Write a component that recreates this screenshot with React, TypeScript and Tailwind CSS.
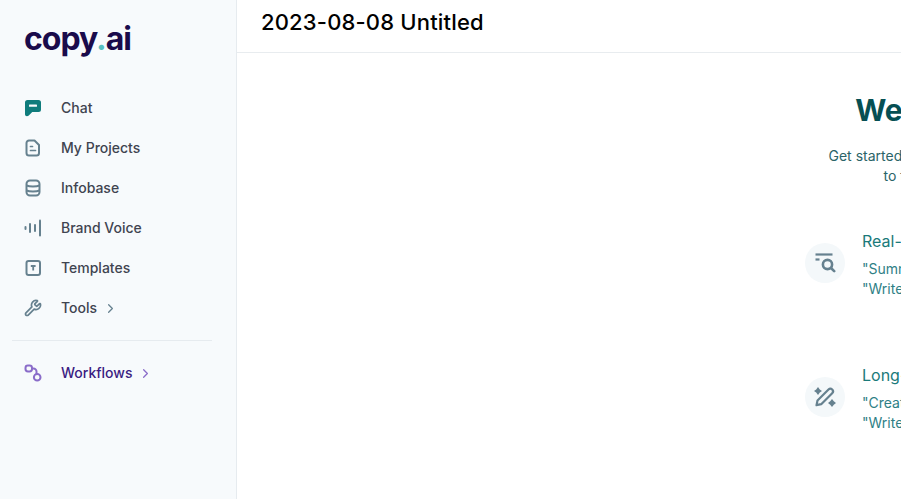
import { ChevronRight, Wrench } from "lucide-react";
import type { ReactNode } from "react";

const ChatIcon = () => (
  <svg width="18" height="18" viewBox="0 0 18 18">
    <path d="M3.5 1h11A2.5 2.5 0 0 1 17 3.5v7a2.5 2.5 0 0 1-2.5 2.5H8.2l-3.4 3.4C3.2 17.9 1 17.2 1 15.2V3.5A2.5 2.5 0 0 1 3.5 1z" fill="#0f7c7c" />
    <rect x="5" y="5.6" width="8" height="2.2" rx="0.6" fill="#f7fafc" />
  </svg>
);

const ProjectIcon = () => (
  <svg width="18" height="18" viewBox="0 0 18 18" fill="none" stroke="#66818f" strokeWidth="2" strokeLinejoin="round">
    <path d="M5 1.5h5.5L15 6v8a2.5 2.5 0 0 1-2.5 2.5H5A2.5 2.5 0 0 1 2.5 14V4A2.5 2.5 0 0 1 5 1.5z" />
    <path d="M6.5 7.5h2M6.5 11.5h5" strokeLinecap="round" strokeWidth="1.7" />
  </svg>
);

const DatabaseIcon = () => (
  <svg width="18" height="18" viewBox="0 0 18 18" fill="none" stroke="#66818f" strokeWidth="2">
    <rect x="2.5" y="1.5" width="13" height="15" rx="3.5" />
    <path d="M2.5 6.5c3 1.3 10 1.3 13 0M2.5 11.5c3 1.3 10 1.3 13 0" />
  </svg>
);

const VoiceIcon = () => (
  <svg width="18" height="18" viewBox="0 0 18 18" fill="none" stroke="#66818f" strokeLinecap="round" strokeWidth="2">
    <path d="M1.5 8v2" />
    <path d="M6 5v8" />
    <path d="M11 6v6" />
    <path d="M16 1.5v15" />
  </svg>
);

const TemplateIcon = () => (
  <svg width="18" height="18" viewBox="0 0 18 18" fill="none" stroke="#66818f">
    <rect x="2.5" y="2" width="13.5" height="14" rx="2" strokeWidth="2" />
    <path d="M6.8 7h4.8M9.2 7v4.5" strokeWidth="1.8" />
  </svg>
);

const FlowIcon = () => (
  <svg width="18" height="18" viewBox="0 0 18 18" fill="none" stroke="#8a6cc9" strokeWidth="2">
    <rect x="1.5" y="1.5" width="6.5" height="6" rx="2.4" />
    <circle cx="13.2" cy="13.2" r="3.3" />
    <path d="M8 4.5h1.5a3 3 0 0 1 3 3v2.5" />
  </svg>
);

const SearchListIcon = () => (
  <svg width="22" height="22" viewBox="0 0 22 22" fill="none" stroke="#66818f">
    <path d="M1.5 2.5h17" strokeWidth="2.2" />
    <path d="M1.5 7.5h4" strokeWidth="2.2" />
    <circle cx="13.5" cy="12.5" r="4.6" strokeWidth="2.6" />
    <path d="M17 16l3.2 3.2" strokeWidth="2.6" strokeLinecap="round" />
  </svg>
);

const PencilSparkIcon = () => (
  <svg width="22" height="22" viewBox="0 0 22 22">
    <path d="M3.5 14.5L14.5 3.5a2.6 2.6 0 0 1 3.7 3.7L7.2 18.2l-4.7 1z" fill="none" stroke="#66818f" strokeWidth="2.2" strokeLinejoin="round" />
    <path d="M4 1l1.8 2.4L8 5 5.8 6.6 4 9 2.2 6.6 0 5l2.2-1.6z" fill="#66818f" />
    <path d="M18 13l1.8 2.2L22 17l-2.2 1.8L18 21l-1.8-2.2L14 17l2.2-1.8z" fill="#66818f" />
  </svg>
);

const NavItem = ({ icon, label, arrow, purple }: { icon: ReactNode; label: string; arrow?: boolean; purple?: boolean }) => (
  <div className="h-10 flex items-center pl-6">
    <div className="w-[18px] h-[18px] flex items-center justify-center">{icon}</div>
    <span className={`ml-[19px] text-sm font-medium ${purple ? "text-[#3b1d82]" : "text-[#3f4450]"}`}>{label}</span>
    {arrow && <ChevronRight size={15} className={`ml-[6px] ${purple ? "text-[#8a6cc9]" : "text-[#66818f]"}`} />}
  </div>
);

const Suggestion = ({ icon, title, first, second, className }: { icon: ReactNode; title: string; first: string; second: string; className: string }) => (
  <div className={`flex items-start ${className}`}>
    <div className="w-10 h-10 mt-[14px] rounded-full bg-[#f4f8fa] flex items-center justify-center shrink-0">{icon}</div>
    <div className="ml-[17px] whitespace-nowrap">
      <div className="text-base leading-6 font-normal text-[#1a7a7a]">{title}</div>
      <div className="mt-[6px] text-sm leading-5 text-[#2f7f86]">
        <div>{first}</div>
        <div>{second}</div>
      </div>
    </div>
  </div>
);

export default function App() {
  return (
    <div className="w-[901px] h-[499px] flex overflow-hidden bg-white font-['Inter',sans-serif]">
      <aside className="w-[237px] shrink-0 bg-[#f7fafc] border-r border-[#e6ebef] flex flex-col">
        <div className="h-[80px] pl-6 pt-[18px] text-[32px] leading-[42px] font-bold tracking-[-1px] text-[#1a0b4b]">
          copy<span className="text-[#58bfc0]">.</span>ai
        </div>
        <nav className="mt-2 flex flex-col">
          <NavItem icon={<ChatIcon />} label="Chat" />
          <NavItem icon={<ProjectIcon />} label="My Projects" />
          <NavItem icon={<DatabaseIcon />} label="Infobase" />
          <NavItem icon={<VoiceIcon />} label="Brand Voice" />
          <NavItem icon={<TemplateIcon />} label="Templates" />
          <NavItem icon={<Wrench size={18} strokeWidth={2.3} className="text-[#66818f]" />} label="Tools" arrow />
        </nav>
        <div className="ml-3 w-[200px] mt-3 border-t border-[#e6ebef]" />
        <div className="mt-3">
          <NavItem icon={<FlowIcon />} label="Workflows" arrow purple />
        </div>
      </aside>
      <main className="flex-1 min-w-0 flex flex-col overflow-hidden">
        <header className="h-[53px] shrink-0 border-b border-[#e8ecef] pl-6 flex items-center">
          <h1 className="text-[22px] tracking-[0.17px] font-medium text-black pb-[7px]">2023-08-08 Untitled</h1>
        </header>
        <div className="flex-1 overflow-hidden">
          <div className="w-[420px] ml-[568px] pt-[39px] flex flex-col">
            <h2 className="text-[30px] leading-9 font-bold text-[#064f53] whitespace-nowrap text-center w-[392px]">Welcome to Copy.ai</h2>
            <p className="mt-[18px] text-sm leading-5 text-[#2b6468] text-center w-[404px] whitespace-nowrap">
              Get started by writing a task and Chat can do the rest.
              <br />
              to the prompts below and get writing.
            </p>
            <Suggestion
              className="mt-[43px]"
              icon={<SearchListIcon />}
              title="Real-time information"
              first={'"Summarize the latest news"'}
              second={'"Write a post on current trends"'}
            />
            <Suggestion
              className="mt-[64px]"
              icon={<PencilSparkIcon />}
              title="Long-form content"
              first={'"Create a detailed outline"'}
              second={'"Write a blog post about AI"'}
            />
          </div>
        </div>
      </main>
    </div>
  );
}
